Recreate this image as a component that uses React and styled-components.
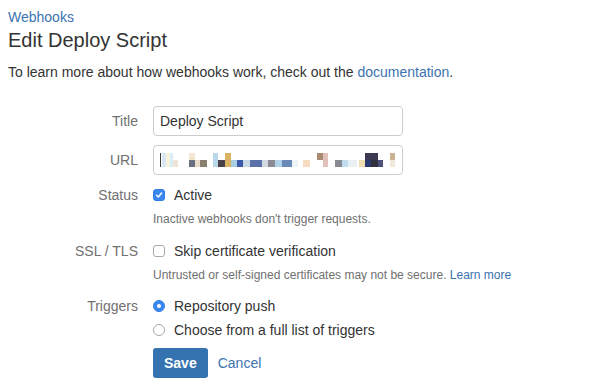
import React from "react";
import styled, { createGlobalStyle } from "styled-components";

const GlobalStyle = createGlobalStyle`
    body {
        margin: 0;
        background: #ffffff;
        font-family: "Liberation Sans", Arial, sans-serif;
        color: #333333;
        font-size: 14px;
    }
`;

const Page = styled.div`
    padding: 7px 8px 0;
`;

const Link = styled.a`
    color: #3b73af;
    text-decoration: none;
    cursor: pointer;
`;

const Breadcrumb = styled.div`
    font-size: 14px;
    line-height: 20px;
`;

const Heading = styled.h2`
    margin: 1px 0 0;
    font-size: 20px;
    font-weight: 400;
    line-height: 24px;
    color: #333333;
`;

const Intro = styled.p`
    margin: 10px 0 0;
    line-height: 20px;
`;

const Form = styled.form`
    margin-top: 24px;
    display: grid;
    grid-template-columns: 130px 1fr;
    column-gap: 15px;
    align-items: center;
`;

const Label = styled.label`
    text-align: right;
    color: #707070;
    line-height: 20px;
    margin-top: ${(p) => p.$mt || 0}px;
    align-self: ${(p) => (p.$top ? "start" : "center")};
`;

const Field = styled.div`
    margin-top: ${(p) => p.$mt || 0}px;
    display: flex;
    flex-direction: column;
`;

const TextBox = styled.div`
    box-sizing: border-box;
    width: 250px;
    height: 30px;
    border: 1px solid #cccccc;
    border-radius: 4px;
    padding: 0 6px;
    display: flex;
    align-items: center;
    color: #333333;
`;

const Option = styled.div`
    display: flex;
    align-items: center;
    gap: 9px;
    line-height: 20px;
    margin-top: ${(p) => p.$mt || 0}px;
`;

const Box = styled.span`
    box-sizing: border-box;
    width: 12px;
    height: 12px;
    border-radius: ${(p) => (p.$round ? "50%" : "3px")};
    border: 1px solid ${(p) => (p.$on ? "#2f7ee6" : "#a9a9a9")};
    background: ${(p) => (p.$on ? "#3a87ef" : "#ffffff")};
    display: flex;
    align-items: center;
    justify-content: center;
    flex-shrink: 0;
`;

const Dot = styled.span`
    width: 4px;
    height: 4px;
    border-radius: 50%;
    background: #ffffff;
`;

const Help = styled.div`
    font-size: 12px;
    line-height: 16px;
    color: #707070;
    margin-top: 6px;
`;

const Actions = styled.div`
    display: flex;
    align-items: center;
    gap: 10px;
    margin-top: 8px;
`;

const SaveButton = styled.button`
    height: 30px;
    padding: 0 11px;
    border: none;
    border-radius: 3px;
    background: #3572b0;
    color: #ffffff;
    font-family: inherit;
    font-size: 14px;
    font-weight: 700;
`;

const blocks = [
    [0, 0, 1, 14, "#3a3a3a"],
    [2, 0, 4, 14, "#d6e9f5"],
    [6, 0, 4, 14, "#f7f4dc"],
    [10, 0, 3, 14, "#d8eff5"],
    [13, 7, 5, 7, "#efe4d6"],
    [29, 0, 6, 7, "#f3e6d2"],
    [29, 7, 6, 7, "#6b7181"],
    [35, 7, 5, 7, "#e9ddc9"],
    [40, 7, 7, 7, "#8a8070"],
    [53, 0, 5, 14, "#b9d8ec"],
    [58, 7, 7, 7, "#4b4249"],
    [65, 0, 6, 14, "#d9b264"],
    [71, 7, 6, 7, "#a9cde1"],
    [77, 7, 6, 7, "#3a5aa9"],
    [83, 7, 7, 7, "#c9d9e8"],
    [90, 7, 12, 7, "#5a72a9"],
    [102, 7, 6, 7, "#d2d9e1"],
    [108, 7, 7, 7, "#8b8991"],
    [115, 7, 7, 7, "#b1d1e8"],
    [122, 7, 10, 7, "#6989b9"],
    [132, 7, 6, 7, "#eef4f8"],
    [143, 7, 7, 7, "#f6ddc1"],
    [157, 0, 6, 7, "#a98a71"],
    [163, 0, 5, 14, "#e1c1b9"],
    [175, 7, 7, 7, "#898991"],
    [182, 7, 6, 7, "#c1dced"],
    [188, 7, 9, 7, "#e9f0f4"],
    [199, 7, 6, 7, "#f1ddb1"],
    [205, 0, 13, 7, "#3a3a52"],
    [205, 7, 6, 7, "#2c3a72"],
    [211, 7, 7, 7, "#30303f"],
    [218, 7, 5, 7, "#4b5179"],
    [230, 0, 5, 7, "#c9b191"],
    [230, 7, 5, 7, "#f1e9d9"],
];

const BlurredUrl = () => (
    <svg width="236" height="14" viewBox="0 0 236 14">
        {blocks.map(([x, y, w, h, c], i) => (
            <rect key={i} x={x} y={y} width={w} height={h} fill={c} />
        ))}
    </svg>
);

const Check = () => (
    <svg width="8" height="8" viewBox="0 0 8 8">
        <path d="M1.5 4.2 L3.3 6 L6.6 2" fill="none" stroke="#fff" strokeWidth="1.5" strokeLinecap="round" strokeLinejoin="round" />
    </svg>
);

export default function App() {
    return (
        <Page>
            <GlobalStyle />
            <Breadcrumb>
                <Link>Webhooks</Link>
            </Breadcrumb>
            <Heading>Edit Deploy Script</Heading>
            <Intro>
                To learn more about how webhooks work, check out the <Link>documentation</Link>.
            </Intro>

            <Form>
                <Label>Title</Label>
                <Field>
                    <TextBox>Deploy Script</TextBox>
                </Field>

                <Label $mt={9}>URL</Label>
                <Field $mt={9}>
                    <TextBox>
                        <BlurredUrl />
                    </TextBox>
                </Field>

                <Label $top $mt={10}>Status</Label>
                <Field $mt={10}>
                    <Option>
                        <Box $on>
                            <Check />
                        </Box>
                        Active
                    </Option>
                    <Help>Inactive webhooks don't trigger requests.</Help>
                </Field>

                <Label $top $mt={14}>SSL / TLS</Label>
                <Field $mt={14}>
                    <Option>
                        <Box />
                        Skip certificate verification
                    </Option>
                    <Help>
                        Untrusted or self-signed certificates may not be secure. <Link>Learn more</Link>
                    </Help>
                </Field>

                <Label $top $mt={13}>Triggers</Label>
                <Field $mt={13}>
                    <Option>
                        <Box $on $round>
                            <Dot />
                        </Box>
                        Repository push
                    </Option>
                    <Option $mt={4}>
                        <Box $round />
                        Choose from a full list of triggers
                    </Option>
                </Field>

                <span />
                <Actions>
                    <SaveButton type="button">Save</SaveButton>
                    <Link>Cancel</Link>
                </Actions>
            </Form>
        </Page>
    );
}
